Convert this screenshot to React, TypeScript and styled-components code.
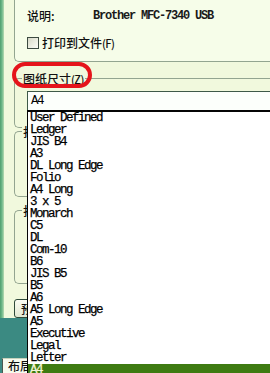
import React from "react";
import styled, { createGlobalStyle } from "styled-components";

const Global = createGlobalStyle`
  html, body { margin: 0; padding: 0; background: #3b8a82; overflow: hidden; }
  * { box-sizing: border-box; }
`;

const cjk = `"Noto Sans CJK SC", "Noto Sans", sans-serif`;
const mono = `"Liberation Mono", "DejaVu Sans Mono", monospace`;

const Page = styled.div`
  position: relative;
  width: 270px;
  height: 373px;
  overflow: hidden;
  display: flex;
  flex-direction: column;
  background: #3b8a82;
  font-family: ${cjk};
  font-size: 12px;
  font-weight: 500;
  color: #111;
`;

const Upper = styled.div`
  height: 318px;
  display: flex;
  flex-shrink: 0;
`;

const Stripe = styled.div`
  width: 4px;
  background: linear-gradient(to right, #4f9f6e 0, #6fb88a 50%, #b9dcb2 100%);
`;

const Dialog = styled.div`
  flex: 1;
  display: flex;
  flex-direction: column;
  padding-left: 10px;
  background: #f1f9dd;
`;

const TopPanel = styled.div`
  height: 62px;
  flex-shrink: 0;
  background: #f6fde9;
  border-left: 1px solid #93a590;
  border-bottom: 1px solid #93a590;
  border-bottom-left-radius: 5px;
  padding: 9px 0 0 12px;
  display: flex;
  flex-direction: column;
  gap: 14px;
`;

const InfoRow = styled.div`
  display: flex;
  align-items: center;
  height: 14px;
  line-height: 14px;
`;

const Label = styled.span`
  width: 66px;
`;

const Value = styled.span`
  font-family: ${mono};
  font-size: 12px;
  font-weight: 700;
  letter-spacing: -1.2px;
  white-space: nowrap;
  color: #1a1a1a;
`;

const CheckRow = styled.label`
  display: flex;
  align-items: center;
  gap: 3px;
  height: 12px;
  line-height: 12px;
`;

const CheckBox = styled.span`
  width: 12px;
  height: 12px;
  border: 1px solid #3c4a40;
  background: linear-gradient(135deg, #d6d8c8 0%, #eef0e4 60%, #fbfbf6 100%);
`;

const Mnemonic = styled.span`
  font-size: 11px;
  letter-spacing: -0.6px;
`;

const Group = styled.div<{ $top: number; $h: number }>`
  position: relative;
  margin-top: ${(p) => p.$top}px;
  height: ${(p) => p.$h}px;
  flex-shrink: 0;
  border-top: 1px solid #93a590;
  border-left: 1px solid #93a590;
  border-bottom: 1px solid #93a590;
  border-radius: 5px 0 0 5px;
  padding: 12px 0 0 12px;
`;

const Legend = styled.span`
  position: absolute;
  left: 7px;
  top: -7px;
  padding: 0 1px;
  background: #f1f9dd;
  line-height: 14px;
  white-space: nowrap;
`;

const Combo = styled.div`
  height: 19px;
  margin-right: -4px;
  background: #fcfffb;
  border-top: 1px solid #3e5a48;
  border-left: 1px solid #3e5a48;
  padding: 3px 0 0 3px;
  font-family: ${mono};
  font-size: 12.5px;
  letter-spacing: -1.5px;
  line-height: 13px;
  color: #000;
`;

const Button = styled.div`
  margin-top: 15px;
  width: 60px;
  height: 19px;
  flex-shrink: 0;
  border: 1px solid #2f4a3a;
  border-radius: 3px;
  background: linear-gradient(#fbfdf3, #e2e8d2);
  padding-left: 6px;
  line-height: 17px;
`;

const TealArea = styled.div`
  height: 40px;
  flex-shrink: 0;
  background: #3b8a82;
`;

const TabRow = styled.div`
  height: 15px;
  flex-shrink: 0;
  display: flex;
  background: #3b8a82;
`;

const Tab = styled.div`
  margin-left: 2px;
  width: 40px;
  background: #f7fbee;
  border-left: 1px solid #4a5a50;
  border-top: 1px solid #c7d2bd;
  padding-left: 5px;
  line-height: 14px;
`;

const Ring = styled.div`
  position: absolute;
  left: 12px;
  top: 62px;
  width: 80px;
  height: 26px;
  border: 4px solid #e5141b;
  border-radius: 13px;
  pointer-events: none;
`;

const DropList = styled.ul`
  position: absolute;
  left: 27px;
  top: 110px;
  right: -4px;
  bottom: 0;
  margin: 0;
  padding: 0;
  list-style: none;
  background: #ffffff;
  border-top: 2px solid #050505;
  border-left: 1px solid #050505;
  overflow: hidden;
`;

const Item = styled.li<{ $selected?: boolean }>`
  height: 12px;
  line-height: 12px;
  padding-left: 2px;
  font-family: ${mono};
  font-size: 12.5px;
  letter-spacing: -1.5px;
  white-space: pre;
  -webkit-text-stroke: 0.25px currentColor;
  color: ${(p) => (p.$selected ? "#f4f6d8" : "#000")};
  background: ${(p) => (p.$selected ? "#3e7b12" : "transparent")};
`;

const sizes = [
  "User Defined",
  "Ledger",
  "JIS B4",
  "A3",
  "DL Long Edge",
  "Folio",
  "A4 Long",
  "3 x 5",
  "Monarch",
  "C5",
  "DL",
  "Com-10",
  "B6",
  "JIS B5",
  "B5",
  "A6",
  "A5 Long Edge",
  "A5",
  "Executive",
  "Legal",
  "Letter",
  "A4",
];

export default function App() {
  return (
    <Page>
      <Global />
      <Upper>
        <Stripe />
        <Dialog>
          <TopPanel>
            <InfoRow>
              <Label>说明:</Label>
              <Value>Brother MFC-7340 USB</Value>
            </InfoRow>
            <CheckRow>
              <CheckBox />
              <span>
                打印到文件<Mnemonic>(F)</Mnemonic>
              </span>
            </CheckRow>
          </TopPanel>
          <Group $top={16} $h={50}>
            <Legend>
              图纸尺寸<Mnemonic>(Z)</Mnemonic>
            </Legend>
            <Combo>A4</Combo>
          </Group>
          <Group $top={3} $h={66}>
            <Legend>打</Legend>
          </Group>
          <Group $top={13} $h={74}>
            <Legend>打</Legend>
          </Group>
          <Button>预</Button>
        </Dialog>
      </Upper>
      <TealArea />
      <TabRow>
        <Tab>布局</Tab>
      </TabRow>
      <Ring />
      <DropList>
        {sizes.map((s, i) => (
          <Item key={s} $selected={i === sizes.length - 1}>
            {s}
          </Item>
        ))}
      </DropList>
    </Page>
  );
}
